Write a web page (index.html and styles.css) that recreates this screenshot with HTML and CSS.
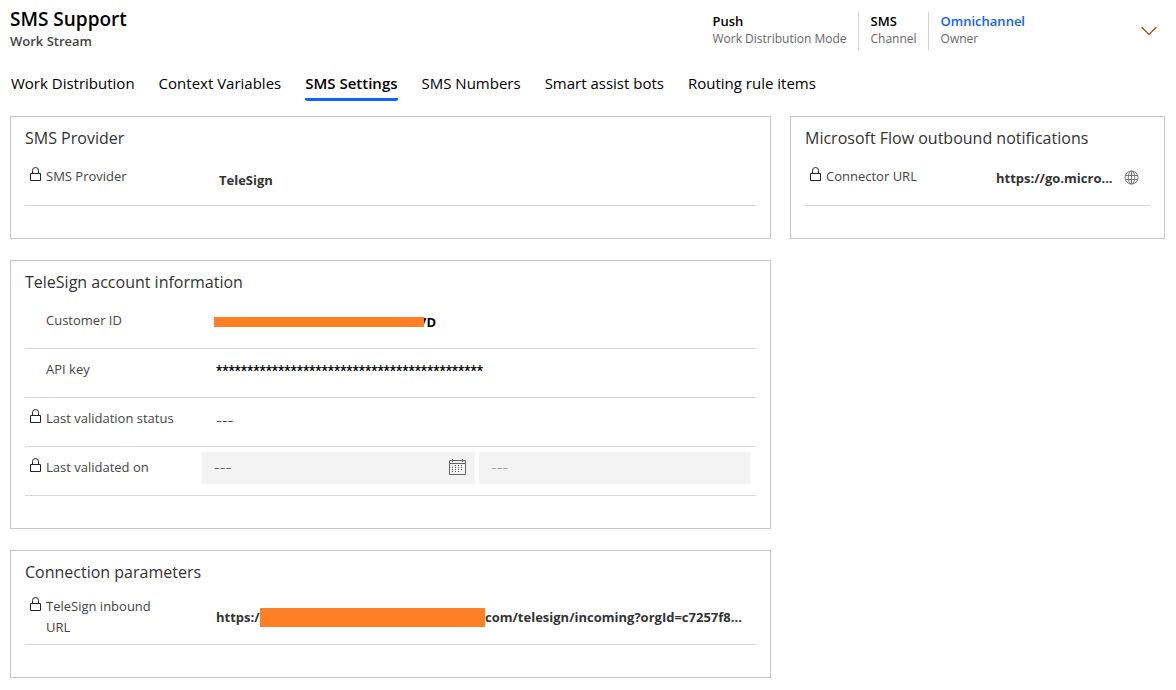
FILE: index.html
```html
<!DOCTYPE html>
<html lang="en">
<head>
<meta charset="utf-8">
<meta name="viewport" content="width=device-width, initial-scale=1">
<title>SMS Support - Work Stream</title>
<link rel="stylesheet" href="styles.css">
</head>
<body>
<svg class="sprite" aria-hidden="true">
  <symbol id="lock" viewBox="0 0 13 15"><path d="M1.5 6.500h10v7h-10zM3.500 6.500V3.500Q3.500 .5 6.500 .5T9.500 3.500V6.500" fill="none" stroke="currentColor"/></symbol>
</svg>
<header class="header">
  <div class="identity">
    <h1 class="title">SMS Support</h1>
    <p class="subtitle">Work Stream</p>
  </div>
  <dl class="facts">
    <div class="fact"><dt class="fact-name">Work Distribution Mode</dt><dd class="fact-value">Push</dd></div>
    <div class="fact"><dt class="fact-name">Channel</dt><dd class="fact-value">SMS</dd></div>
    <div class="fact"><dt class="fact-name">Owner</dt><dd class="fact-value"><a class="owner" href="#">Omnichannel</a></dd></div>
  </dl>
  <button class="expand" type="button" aria-label="Expand header">
    <svg width="18" height="10" viewBox="0 0 18 10"><path d="M1.500 1l7.500 7.500L16.500 1" fill="none" stroke="#8a4b10" stroke-width="1.200"/></svg>
  </button>
</header>
<nav class="tabs" role="tablist" aria-label="Form sections">
  <button class="tab" type="button" role="tab">Work Distribution</button>
  <button class="tab" type="button" role="tab">Context Variables</button>
  <button class="tab tab-active" type="button" role="tab" aria-selected="true">SMS Settings</button>
  <button class="tab" type="button" role="tab">SMS Numbers</button>
  <button class="tab" type="button" role="tab">Smart assist bots</button>
  <button class="tab" type="button" role="tab">Routing rule items</button>
</nav>
<main class="content">
  <div class="column">
    <section class="panel">
      <h2 class="panel-title">SMS Provider</h2>
      <div class="row row-single">
        <svg class="lock"><use href="#lock"/></svg>
        <label class="label" for="provider">SMS Provider</label>
        <div class="field field-choice"><input class="value" id="provider" value="TeleSign" readonly></div>
      </div>
    </section>
    <section class="panel">
      <h2 class="panel-title">TeleSign account information</h2>
      <div class="row">
        <label class="label" for="customer">Customer ID</label>
        <div class="field"><span class="mask mask-id"></span><input class="value value-dark value-tail" id="customer" value="7D"></div>
      </div>
      <div class="row">
        <label class="label" for="key">API key</label>
        <div class="field"><input class="value value-dark value-key" id="key" value="*******************************************"></div>
      </div>
      <div class="row">
        <svg class="lock"><use href="#lock"/></svg>
        <label class="label" for="status">Last validation status</label>
        <div class="field"><input class="value value-empty" id="status" value="---" readonly></div>
      </div>
      <div class="row">
        <svg class="lock"><use href="#lock"/></svg>
        <label class="label" for="date">Last validated on</label>
        <div class="date-time">
          <div class="box">
            <input class="box-input value-empty" id="date" value="---" readonly>
            <svg class="calendar" width="17" height="16" viewBox="0 0 17 16"><path d="M.5 1.500h16v14H.5zM.5 4.500h16M3.500 0v3M13.500 0v3" fill="none" stroke="#666"/><path d="M6 6.500h9M3 8.500h12M3 10.500h12M3 12.500h9" fill="none" stroke="#555" stroke-dasharray="1 2"/></svg>
          </div>
          <div class="box"><input class="box-input box-muted value-empty" aria-label="Last validated on, time" value="---" readonly></div>
        </div>
      </div>
    </section>
    <section class="panel">
      <h2 class="panel-title">Connection parameters</h2>
      <div class="row row-tall">
        <svg class="lock"><use href="#lock"/></svg>
        <label class="label" for="inbound">TeleSign inbound URL</label>
        <div class="field"><span class="scheme">https://</span><span class="mask mask-url"></span><input class="value" id="inbound" value="com/telesign/incoming?orgId=c7257f8..." readonly></div>
      </div>
    </section>
  </div>
  <div class="column">
    <section class="panel">
      <h2 class="panel-title">Microsoft Flow outbound notifications</h2>
      <div class="row row-single">
        <svg class="lock"><use href="#lock"/></svg>
        <label class="label" for="connector">Connector URL</label>
        <div class="field field-link">
          <input class="value" id="connector" value="https://go.micro..." readonly>
          <button class="globe" type="button" aria-label="Open URL"><svg width="15" height="15" viewBox="0 0 15 15"><g fill="none" stroke="#777"><circle cx="7.500" cy="7.500" r="6.500"/><ellipse cx="7.500" cy="7.500" rx="3.200" ry="6.500"/><path d="M7.500 1v13M1.500 5.500h12M1.500 9.500h12"/></g></svg></button>
        </div>
      </div>
    </section>
  </div>
</main>
</body>
</html>
```
FILE: styles.css
```css
* { box-sizing: border-box; }
body {
  margin: 0;
  padding: 7px 11px 12px 10px;
  background: #fff;
  color: #333;
  font-family: "Segoe UI", "Open Sans", "Noto Sans", sans-serif;
  font-size: 13px;
}
h1, h2, p, dl, dd { margin: 0; }
button, input { font: inherit; color: inherit; border: 0; padding: 0; background: none; }
.sprite { display: none; }

.header { display: flex; align-items: flex-start; }
.identity { flex: 1; }
.title { color: #000; font-size: 19px; line-height: 25px; font-weight: 600; }
.subtitle { color: #444; line-height: 18px; font-weight: 600; }
.facts { display: flex; padding-top: 5px; }
.fact {
  display: flex;
  flex-direction: column-reverse;
  height: 38px;
  padding: 0 11px 2px 12px;
  justify-content: center;
}
.fact + .fact { border-left: 1px solid #d2d2d2; }
.fact-name { color: #666; font-size: 12px; line-height: 18px; }
.fact-value { color: #000; line-height: 18px; font-weight: 600; }
.owner { color: #1160ff; text-decoration: none; }
.expand { margin: 14px 7px 0 104px; height: 20px; }
.expand svg { display: block; }

.tabs { display: flex; gap: 24px; padding: 22px 0 0 1px; }
.tab { color: #000; font-size: 15px; line-height: 22px; padding-bottom: 7px; white-space: nowrap; }
.tab-active { font-weight: 600; padding-bottom: 4px; border-bottom: 3px solid #0b64ff; border-radius: 2px; }

.content {
  display: grid;
  grid-template-columns: 761fr 375fr;
  gap: 19px;
  align-items: start;
  padding-top: 15px;
}
.column { display: grid; gap: 21px; min-width: 0; }
.panel { border: 1px solid #c8c8c8; padding: 0 14px 32px; }
.panel-title { font-size: 16px; line-height: 24px; padding: 9px 0 6px; font-weight: 400; }
.row {
  display: grid;
  grid-template-columns: 21px 156px minmax(0, 1fr);
  min-height: 49px;
  border-bottom: 1px solid #d6d6d6;
}
.row-single { min-height: 50px; }
.lock { grid-column: 1; width: 13px; height: 15px; margin: 11px 0 0 4px; color: #222; }
.label { grid-column: 2; grid-row: 1; color: #444; line-height: 21px; padding-top: 10px; }
.row-tall .label { padding: 6px 40px 6px 0; }
.row-tall .lock { margin-top: 7px; }
.field { grid-column: 3; grid-row: 1; display: flex; align-items: center; min-width: 0; padding-left: 14px; padding-bottom: 4px; }
.field-choice { padding: 0 0 2px 17px; }
.value { flex: 1; min-width: 0; font-weight: 700; line-height: 20px; }
.value-dark { color: #000; }
.value-key { font-family: Roboto, sans-serif; font-size: 14px; font-weight: 500; }
.value-empty { font-size: 18px; font-weight: 300; line-height: 20px; }
.mask { flex: none; background: #ff7f27; position: relative; z-index: 1; }
.mask-id { width: 210px; height: 10px; margin-left: -2px; }
.value-tail { margin-left: -5px; }
.scheme { font-weight: 700; width: 44px; white-space: nowrap; }
.row-tall .field { padding-bottom: 0; }
.mask-url { width: 225px; height: 19px; }
.field-link { padding: 0 11px 6px 14px; gap: 10px; }
.globe svg { display: block; }

.date-time {
  grid-column: 3;
  grid-row: 1;
  display: grid;
  grid-template-columns: 273fr 271fr;
  gap: 4px;
  align-items: start;
  padding: 5px 6px 0 0;
}
.box { display: flex; align-items: center; height: 32px; padding: 0 9px 2px 12px; background: #f3f3f3; }
.box-input { flex: 1; min-width: 0; color: #555; }
.box-muted { color: #999; }
```
